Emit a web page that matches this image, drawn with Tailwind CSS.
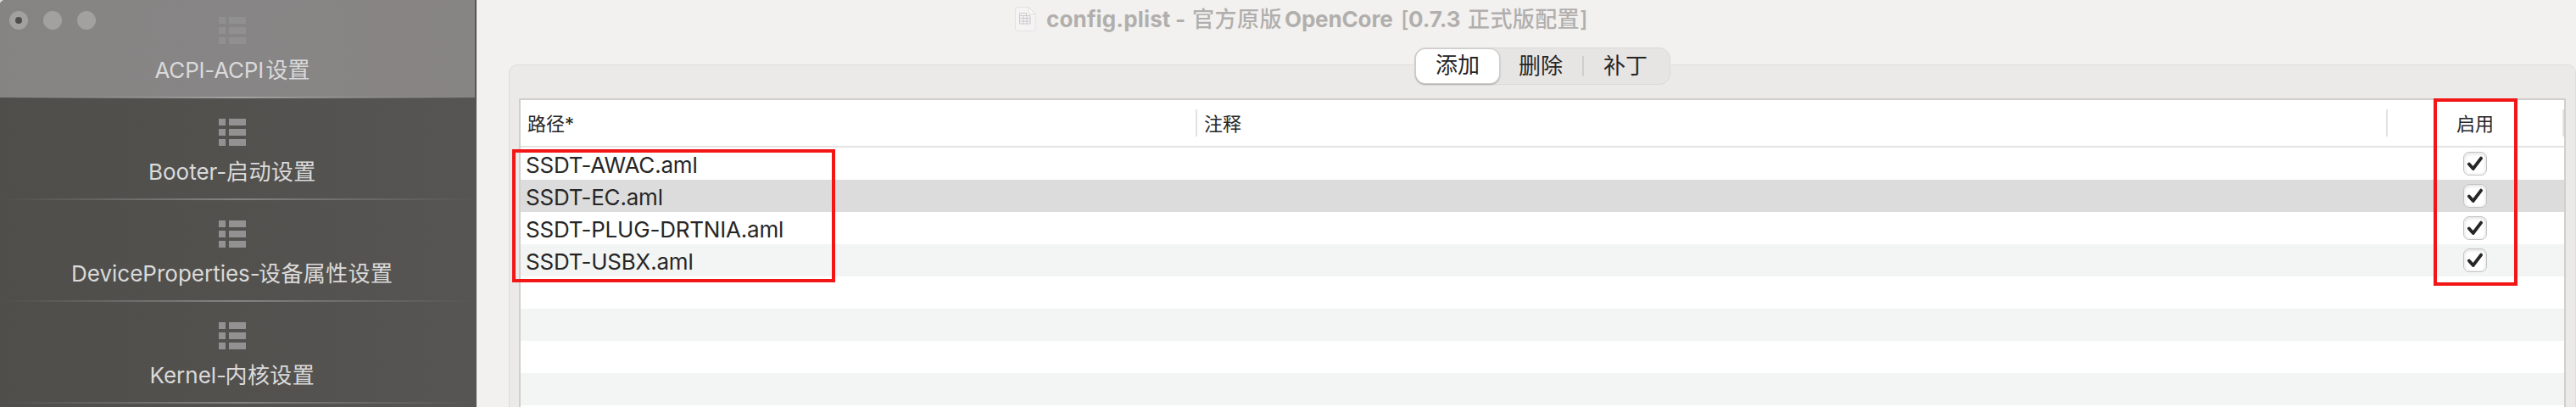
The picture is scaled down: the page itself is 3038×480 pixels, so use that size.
<!DOCTYPE html>
<html lang="zh">
<head>
<meta charset="utf-8">
<title>config.plist</title>
<script src="https://cdn.jsdelivr.net/npm/@tailwindcss/browser@4"></script>
</head>
<body class="w-[3038px] h-[480px] overflow-hidden bg-[#f3f1ef] font-['Inter','Noto_Sans_CJK_SC',sans-serif] text-[26px] leading-[38px] text-[#262626]">
<svg class="hidden">
  <symbol id="list" viewBox="0 0 32 32"><path d="M0 0h8v8H0zM12 0h20v8H12zM0 12h8v8H0zM12 12h20v8H12zM0 24h8v8H0zM12 24h20v8H12z" fill="currentColor"/></symbol>
  <symbol id="check" viewBox="0 0 28 28"><path d="M6.3 14.6 11.6 20.4 21.6 7.2" fill="none" stroke="#262626" stroke-width="4.2" stroke-linecap="round" stroke-linejoin="round"/></symbol>
</svg>
<div class="relative flex h-full w-full">
  <aside class="relative w-[562px] shrink-0 h-full overflow-hidden bg-linear-to-r from-[#504e4b] via-[#53514e] to-[#575553] text-[#dadada]">
    <div class="relative h-[120px] flex flex-col items-center pt-5 pr-[14px] whitespace-pre">
      <div class="absolute left-0 top-0 w-[560px] h-[115px] bg-linear-to-r from-[#868483] via-[#888586] to-[#878583]"></div>
      <div class="absolute left-0 top-[114px] w-[560px] h-[2px] bg-linear-to-r from-transparent via-[#a3a19f] to-transparent"></div>
      <svg class="relative size-8 text-[#919090]"><use href="#list"/></svg>
      <div class="relative mt-[12px] flex"><span class="w-[131px] tracking-[-0.2px]">ACPI-ACPI</span><span class="w-[52px]">设置</span></div>
    </div>
    <div class="relative h-[120px] flex flex-col items-center pt-5 pr-[14px] whitespace-pre">
      <div class="absolute left-0 top-[114px] w-[560px] h-[2px] bg-linear-to-r from-transparent via-[#858381] to-transparent"></div>
      <svg class="size-8 text-[#929292]"><use href="#list"/></svg>
      <div class="mt-[12px] flex"><span class="w-[92px]">Booter-</span><span class="w-[106px] tracking-[0.4px]">启动设置</span></div>
    </div>
    <div class="relative h-[120px] flex flex-col items-center pt-5 pr-[14px] whitespace-pre">
      <div class="absolute left-0 top-[114px] w-[560px] h-[2px] bg-linear-to-r from-transparent via-[#858381] to-transparent"></div>
      <svg class="size-8 text-[#929292]"><use href="#list"/></svg>
      <div class="mt-[12px] flex"><span class="w-[221px]">DeviceProperties-</span><span class="w-[159px] tracking-[0.4px]">设备属性设置</span></div>
    </div>
    <div class="relative h-[120px] flex flex-col items-center pt-5 pr-[14px] whitespace-pre">
      <div class="absolute left-0 top-[114px] w-[560px] h-[2px] bg-linear-to-r from-transparent via-[#858381] to-transparent"></div>
      <svg class="size-8 text-[#929292]"><use href="#list"/></svg>
      <div class="mt-[12px] flex"><span class="w-[89px]">Kernel-</span><span class="w-[106px] tracking-[0.4px]">内核设置</span></div>
    </div>
    <svg class="absolute left-0 top-0 w-[130px] h-[50px]" viewBox="0 0 130 50">
      <path d="M0 0h4Q1.5 1 0 3.500z" fill="#dcdad8"/>
      <g fill="#a2a1a0"><circle cx="22" cy="24" r="11"/><circle cx="62" cy="24" r="11"/><circle cx="102" cy="24" r="11"/></g>
      <circle cx="22" cy="24" r="4" fill="#504f4e"/>
    </svg>
  </aside>

  <main class="w-[2476px] shrink-0 h-full flex flex-col pl-[38px]">
    <header class="h-[76px] shrink-0 flex items-start pl-[596px] pt-1 font-bold text-[#b1afad] whitespace-pre">
      <svg class="w-[28px] h-[32px] mt-[3px] mr-[10px] shrink-0" viewBox="0 0 28 32">
        <path d="M4 1.500h13l8 8v17.500a2.500 2.500 0 0 1-2.500 2.500H4A2.500 2.500 0 0 1 1.500 27V4A2.500 2.500 0 0 1 4 1.500z" fill="#f5f4f5" stroke="#e4e2e2"/>
        <path d="M17 1.500v6a2 2 0 0 0 2 2h6z" fill="#fafafa" stroke="#dedcdc"/>
        <path d="M6.500 8.500h8v3h4.500v9.500H6.500zM6.500 11.500h9M6.500 14.500h12.500M6.500 18h12.500M11 11v10M15 11v10" fill="none" stroke="#cbc9ca"/>
      </svg>
      <span class="w-[152px] tracking-[0.15px]">config.plist</span><span class="w-[20px]">-</span><span class="w-[109px] tracking-[0.5px] font-medium">官方原版</span><span class="w-[137px] tracking-[-0.15px]">OpenCore</span><span class="w-[9px] font-medium">[</span><span class="w-[70px]">0.7.3</span><span class="w-[132px] tracking-[0.4px] font-medium">正式版配置</span><span class="font-medium">]</span>
    </header>

    <section class="relative w-[2438px] h-[420px] shrink-0 rounded-t-[10px] border border-[#dfdddb] bg-[#ebeae8] pt-[39px] pl-[11px]">
      <nav class="absolute left-[1067px] top-[-21px] w-[302px] h-[44px] rounded-[13px] border border-[#dad9d7] bg-[#e6e5e3] flex items-center p-px pt-px">
        <span class="w-[98px] h-10 rounded-[11px] bg-white shadow-[0_0_0_1px_#d0cccb,0_1px_2px_1px_#aaa6a8] text-center leading-[38px]">添加</span>
        <span class="w-[98px] text-center leading-[38px]">删除</span>
        <span class="w-[2px] h-6 bg-[#d0cfcd]"></span>
        <span class="w-[98px] text-center leading-[38px]">补丁</span>
      </nav>
      <div class="w-[2414px] h-[380px] border-2 border-[#d0cfcd] bg-white">
        <div class="flex items-center h-[56px] border-b-2 border-[#e4e4e4] text-[22px] leading-[32px]">
          <div class="w-[798px] h-8 -mt-px pl-2 border-r-2 border-[#e2e2e2]"><span class="block pt-px">路径*</span></div>
          <div class="w-[1404px] h-8 -mt-px pl-2 border-r-2 border-[#e2e2e2]"><span class="block pt-px">注释</span></div>
          <div class="w-[208px] h-8 -mt-px text-center border-r-2 border-[#e2e2e2]"><span class="block pt-px">启用</span></div>
        </div>
        <div class="flex h-[38px]"><span class="w-[2202px] pl-[6px] pt-[2px] tracking-[-0.2px]">SSDT-AWAC.aml</span><span class="w-[206px] flex justify-center pt-[5px]"><svg class="size-7 rounded-[7px] border border-[#c4c4c4] bg-white shadow-[inset_0_1px_4px_#d8d8d8]"><use href="#check"/></svg></span></div>
        <div class="flex h-[38px] bg-[#dcdcdc]"><span class="w-[2202px] pl-[6px] pt-[2px] tracking-[-0.2px]">SSDT-EC.aml</span><span class="w-[206px] flex justify-center pt-[5px]"><svg class="size-7 rounded-[7px] border border-[#c4c4c4] bg-white shadow-[inset_0_1px_4px_#d8d8d8]"><use href="#check"/></svg></span></div>
        <div class="flex h-[38px]"><span class="w-[2202px] pl-[6px] pt-[2px] tracking-[-0.2px]">SSDT-PLUG-DRTNIA.aml</span><span class="w-[206px] flex justify-center pt-[5px]"><svg class="size-7 rounded-[7px] border border-[#c4c4c4] bg-white shadow-[inset_0_1px_4px_#d8d8d8]"><use href="#check"/></svg></span></div>
        <div class="flex h-[38px] bg-[#f3f5f4]"><span class="w-[2202px] pl-[6px] pt-[2px] tracking-[-0.2px]">SSDT-USBX.aml</span><span class="w-[206px] flex justify-center pt-[5px]"><svg class="size-7 rounded-[7px] border border-[#c4c4c4] bg-white shadow-[inset_0_1px_4px_#d8d8d8]"><use href="#check"/></svg></span></div>
        <div class="h-[38px]"></div>
        <div class="h-[38px] bg-[#f3f5f4]"></div>
        <div class="h-[38px]"></div>
        <div class="h-[38px] bg-[#f3f5f4]"></div>
      </div>
    </section>
  </main>

  <div class="absolute left-[604px] top-[176px] w-[381px] h-[157px] border-4 border-[#f21616]"></div>
  <div class="absolute left-[2870px] top-[116px] w-[99px] h-[221px] border-4 border-[#f21616]"></div>
</div>
</body>
</html>
